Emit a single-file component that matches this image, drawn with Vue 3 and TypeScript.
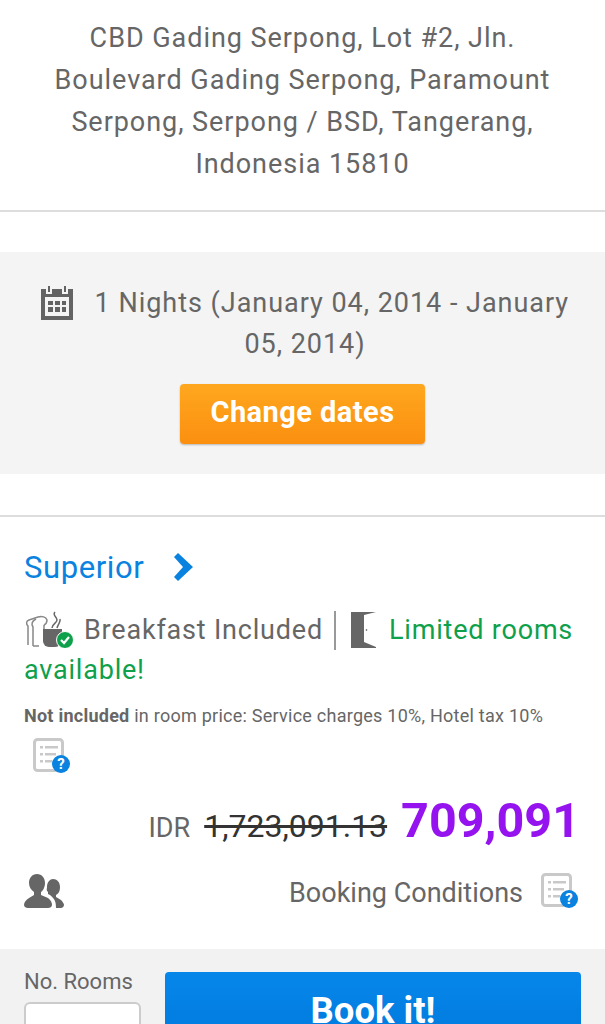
<script setup lang="ts">
const address = 'CBD Gading Serpong, Lot #2, Jln. Boulevard Gading Serpong, Paramount Serpong, Serpong / BSD, Tangerang, Indonesia 15810'
const oldPrice = '1,723,091.13'
const price = '709,091'
</script>

<template>
  <div class="page">
    <section class="address">{{ address }}</section>

    <section class="dates">
      <p class="dates-text">
        <svg class="cal" viewBox="0 0 32 34" width="32" height="34">
          <rect y="3" width="32" height="31" fill="#636363" />
          <g fill="#f4f4f4"><rect x="5" width="6" height="8" /><rect x="21" width="6" height="8" /></g>
          <g fill="#636363"><rect x="7" width="2" height="6" /><rect x="23" width="2" height="6" /></g>
          <rect x="4" y="11" width="24" height="19" fill="#f4f4f4" />
          <g fill="#636363">
            <rect x="7" y="15" width="5" height="4" /><rect x="14" y="15" width="5" height="4" /><rect x="21" y="15" width="4" height="4" />
            <rect x="7" y="21" width="5" height="5" /><rect x="14" y="21" width="5" height="5" /><rect x="21" y="21" width="4" height="5" />
          </g>
        </svg>
        1 Nights (January 04, 2014 - January 05, 2014)
      </p>
      <button class="change" type="button">Change dates</button>
    </section>

    <section class="room">
      <h2 class="room-name">
        <span>Superior</span>
        <svg viewBox="0 0 20 28" width="20" height="28"><path fill="#0a82e0" d="M5 0l15 14L5 28l-4-4 9-10-9-10z" /></svg>
      </h2>

      <p class="facts">
        <svg class="bf" viewBox="0 0 50 38" width="50" height="38">
          <g fill="none" stroke="#888" stroke-width="1.500">
            <path d="M4 35V16c-2-2-2-5 1-6l9-3c4-1 8 0 9 3 0 2-1 4-3 5" />
            <path d="M9 36V17c-2-3-1-6 3-8" />
            <path d="M9 36h6M20 15v4" />
          </g>
          <g fill="none" stroke="#666" stroke-width="1.500">
            <path d="M31 2c-3 3 2 5 2 8 0 3-5 4-5 8" />
            <path d="M36 9c1 3-2 5-3 9" />
          </g>
          <path fill="#666" d="M19 19h19v11a7 7 0 0 1-7 7h-6a6 6 0 0 1-6-6z" />
          <circle cx="41" cy="30" r="8.500" fill="#0ea04b" stroke="#fff" stroke-width="1" />
          <path fill="none" stroke="#fff" stroke-width="2.200" d="M37 30l3 3 5-6" />
        </svg>
        <span>Breakfast Included</span>
        <i class="sep"></i>
        <svg class="door" viewBox="0 0 25 36" width="25" height="36">
          <path fill="#666" d="M0 0h25L13 3v27l12 5v1H0z" />
          <circle cx="15.500" cy="18" r=".8" fill="#444" />
        </svg>
        <span class="limited">Limited rooms</span>
        {{ ' ' }}
        <span class="limited">available!</span>
      </p>

      <p class="tax"><b>Not included</b> in room price: Service charges 10%, Hotel tax 10%</p>

      <svg class="help help-tax" viewBox="0 0 38 36" width="38" height="36">
        <rect x="1.500" y="1.500" width="28" height="31" rx="3" fill="#fff" stroke="#c9c9c9" stroke-width="3" />
        <g fill="#c9c9c9"><rect x="7" y="8" width="3" height="2.500" /><rect x="12" y="8" width="13" height="2.500" /><rect x="7" y="15" width="3" height="2.500" /><rect x="12" y="15" width="11" height="2.500" /><rect x="7" y="22" width="3" height="2.500" /><rect x="12" y="22" width="7" height="2.500" /></g>
        <circle cx="28" cy="26" r="9" fill="#0a82e0" />
        <text x="28" y="31" class="q">?</text>
      </svg>

      <div class="price-row">
        <span class="cur">IDR</span>
        <s class="old">{{ oldPrice }}</s>
        <strong class="price">{{ price }}</strong>
      </div>

      <div class="cond-row">
        <svg class="people" viewBox="0 0 40 34" width="40" height="34">
          <path fill="#666" d="M13 0c5 0 8 4 8 9 0 4-2 8-4 9v3l7 3c3 2 4 5 4 7 0 2-2 3-4 3H4c-2 0-4-1-4-3 0-3 2-5 5-7l5-3v-3c-3-2-5-5-5-9 0-5 3-9 8-9z" />
          <path fill="#666" d="M29 5c4 0 7 3 7 8s-2 7-4 8v2l5 3c2 2 3 4 3 5 0 2-2 3-3 3h-5c0-6-1-9-6-13l-2-1v-2c-2-2-1-3-1-5 0-5 3-8 6-8z" />
        </svg>
        <div class="cond">
          <span>Booking Conditions</span>
          <svg class="help" viewBox="0 0 38 36" width="38" height="36">
            <rect x="1.500" y="1.500" width="28" height="31" rx="3" fill="#fff" stroke="#c9c9c9" stroke-width="3" />
            <g fill="#c9c9c9"><rect x="7" y="8" width="3" height="2.500" /><rect x="12" y="8" width="13" height="2.500" /><rect x="7" y="15" width="3" height="2.500" /><rect x="12" y="15" width="11" height="2.500" /><rect x="7" y="22" width="3" height="2.500" /><rect x="12" y="22" width="7" height="2.500" /></g>
            <circle cx="28" cy="26" r="9" fill="#0a82e0" />
            <text x="28" y="31" class="q">?</text>
          </svg>
        </div>
      </div>
    </section>

    <section class="book">
      <div class="rooms">
        <label for="rooms-input">No. Rooms</label>
        <input id="rooms-input" class="rooms-input" type="text" />
      </div>
      <button class="book-btn" type="button">Book it!</button>
    </section>
  </div>
</template>

<style>
html, body { margin: 0; background: #fff; }
</style>

<style scoped>
.page {
  width: 605px;
  height: 1024px;
  overflow: hidden;
  font-family: Roboto, "Liberation Sans", sans-serif;
  color: #666;
}
p, h2 { margin: 0; font-weight: 400; }
.address {
  box-sizing: border-box;
  height: 212px;
  padding: 17px 40px 0;
  font-size: 27px;
  letter-spacing: .95px;
  line-height: 42px;
  text-align: center;
  border-bottom: 2px solid #ddd;
}
.dates {
  margin-top: 40px;
  height: 222px;
  box-sizing: border-box;
  padding-top: 31px;
  background: #f4f4f4;
  text-align: center;
}
.dates-text {
  padding: 0 30px 0 35px;
  font-size: 27px;
  letter-spacing: .97px;
  line-height: 41px;
}
.cal { vertical-align: -8px; margin-right: 14px; }
.change {
  display: block;
  width: 245px;
  height: 60px;
  margin: 19px auto 0;
  padding: 0 0 4px;
  border: 0;
  border-radius: 4px;
  background: linear-gradient(#ffa71f, #fb8f0f);
  box-shadow: 0 1px 2px rgba(0, 0, 0, .25);
  color: #fff;
  font: 700 29px Roboto, sans-serif;
  letter-spacing: .45px;
}
.room {
  margin-top: 41px;
  padding: 0 24px;
  border-top: 2px solid #ddd;
}
.room-name {
  display: flex;
  align-items: center;
  gap: 29px;
  height: 36px;
  margin-top: 32px;
  color: #0a82e0;
  font-size: 31px;
  letter-spacing: .6px;
}
.facts {
  margin-top: 25px;
  font-size: 27px;
  letter-spacing: .8px;
  line-height: 40px;
}
.bf { vertical-align: -9px; margin-right: 10px; }
.sep {
  display: inline-block;
  width: 2px;
  height: 39px;
  margin: 0 15px 0 11px;
  background: #999;
  vertical-align: -11px;
}
.door { vertical-align: -9px; margin-right: 13px; }
.limited { color: #0ea04b; }
.tax {
  margin-top: 14px;
  font-size: 18px;
  letter-spacing: .25px;
  line-height: 24px;
}
.tax b { font-weight: 700; }
.help { display: block; flex: none; }
.help-tax { margin: 10px 0 0 9px; }
.q { fill: #fff; font: 700 15px Roboto, sans-serif; text-anchor: middle; }
.price-row {
  display: flex;
  justify-content: flex-end;
  align-items: baseline;
  margin-top: 18px;
  padding-right: 1px;
  height: 64px;
}
.cur { font-size: 27px; margin-right: 14px; }
.old { font-size: 32px; color: #333; margin-right: 14px; }
.price { font-size: 48.500px; font-weight: 700; color: #9413ee; }
.cond-row {
  display: flex;
  justify-content: space-between;
  align-items: center;
  height: 50px;
  margin-top: 12px;
}
.people { margin-top: -4px; }
.cond {
  display: flex;
  align-items: center;
  gap: 18px;
  font-size: 27px;
  margin-right: 2px;
}
.cond .help { margin-top: -4px; }
.book {
  display: flex;
  gap: 24px;
  margin-top: 31px;
  padding: 23px 24px 0;
  height: 120px;
  background: #f2f2f2;
}
.rooms { width: 117px; flex: none; }
.rooms label { display: block; margin-top: -1px; font-size: 22px; line-height: 22px; }
.rooms-input {
  display: block;
  box-sizing: border-box;
  width: 117px;
  height: 60px;
  margin-top: 9px;
  border: 2px solid #ccc;
  border-radius: 6px;
  background: #fff;
}
.book-btn {
  flex: 1;
  height: 76px;
  padding: 0;
  border: 0;
  border-radius: 4px;
  background: linear-gradient(#0787ea, #0078dc);
  color: #fff;
  font: 700 36.500px Roboto, sans-serif;
}
</style>
